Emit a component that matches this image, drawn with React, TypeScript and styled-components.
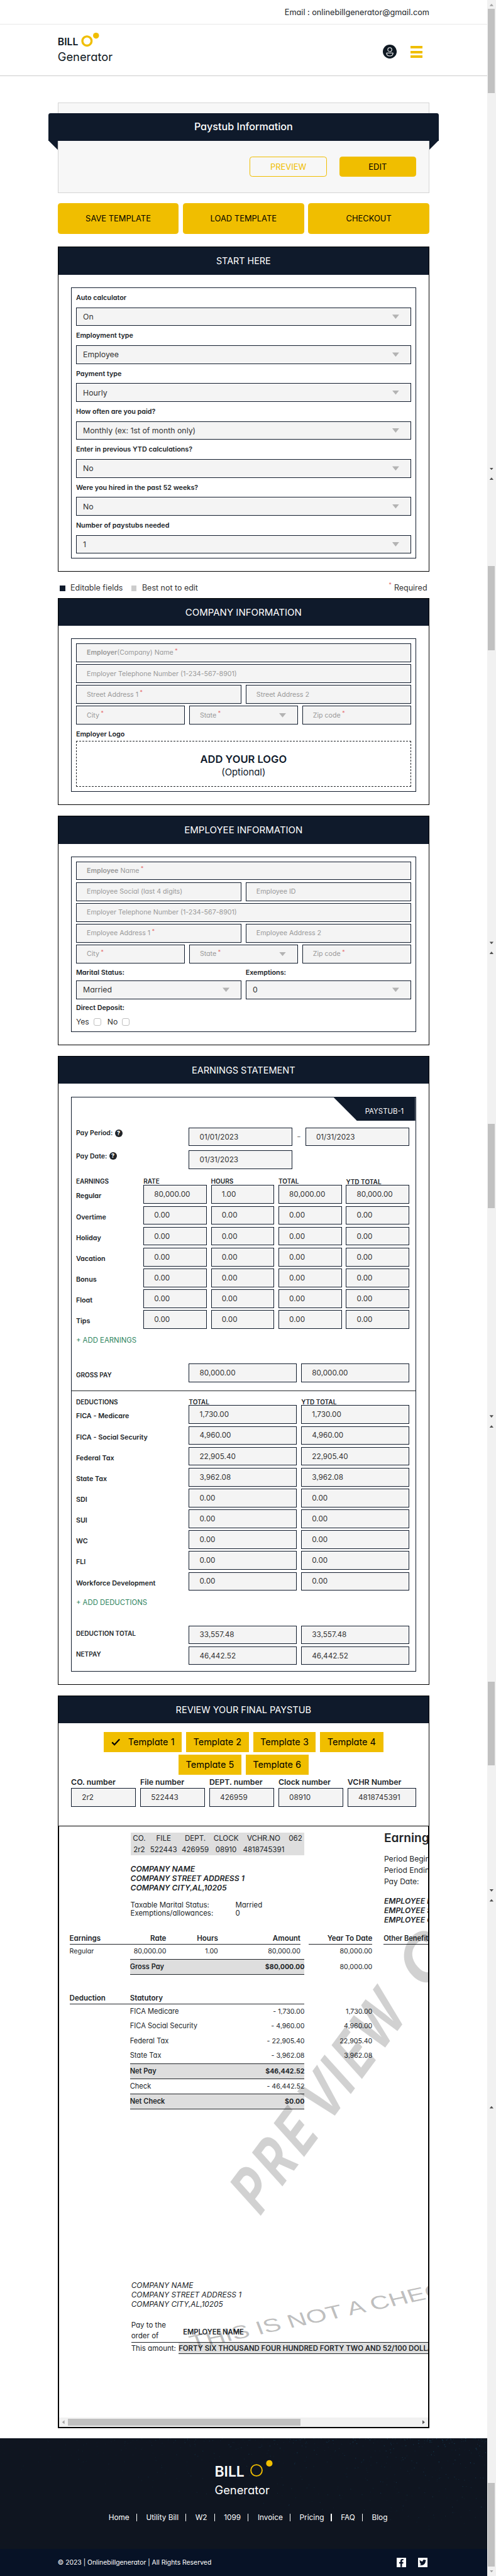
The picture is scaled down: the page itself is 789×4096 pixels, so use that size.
import React from "react";
import styled, { createGlobalStyle, css } from "styled-components";
import { FaFacebookF, FaTwitter } from "react-icons/fa";

const navy = "#0f1a2b";
const gold = "#f0be00";
const ink = "#212529";

const Global = createGlobalStyle`
  * { box-sizing: border-box; }
  html, body { margin: 0; padding: 0; background: #fff; overflow: hidden; }
  body {
    font-family: Inter, "Open Sans", "Liberation Sans", sans-serif;
    font-feature-settings: "cv11" 1, "ss03" 1;
    color: ${ink};
  }
`;

const Page = styled.div`
  zoom: 0.8494;
  display: flex;
  width: 929px;
  height: 4822px;
  white-space: nowrap;
`;
const Main = styled.div`
  width: 912px;
  display: flex;
  flex-direction: column;
`;

/* ---------- header ---------- */
const TopBar = styled.div`
  height: 46px;
  border-bottom: 1px solid #e9e9e9;
  padding: 0 108px;
  display: flex;
  align-items: center;
  justify-content: flex-end;
  font-size: 14.95px;
`;
const Header = styled.header`
  height: 96px;
  border-bottom: 1px solid #ccc;
  padding: 19px 121px 0 108px;
  display: flex;
  justify-content: space-between;
`;
const Logo = styled.div<{ $big?: boolean }>`
  display: flex;
  flex-direction: column;
  color: ${(p) => (p.$big ? "#fff" : "#0f1923")};
`;
const LogoTop = styled.div<{ $big?: boolean }>`
  display: flex;
  height: 28px;
  line-height: 28px;
  font-weight: 600;
  font-size: ${(p) => (p.$big ? "27px" : "18.6px")};
  svg { margin-left: ${(p) => (p.$big ? "10px" : "6px")}; margin-top: ${(p) => (p.$big ? "-9px" : "-4px")}; overflow: visible; }
`;
const LogoBottom = styled.div<{ $big?: boolean }>`
  font-size: 21.6px;
  line-height: 27px;
  margin-top: ${(p) => (p.$big ? "6px" : "0")};
`;
const HeaderIcons = styled.div`
  display: flex;
  gap: 26px;
  padding-top: 19px;
`;
const Burger = styled.div`
  width: 22px;
  padding-top: 2px;
  display: flex;
  flex-direction: column;
  gap: 4px;
  i { height: 5px; background: ${gold}; }
`;
const Body = styled.div`
  padding: 0 108px;
  height: 4423px;
  display: flex;
  flex-direction: column;
`;

/* ---------- intro card ---------- */
const Card = styled.div`
  margin-top: 50px;
  height: 169px;
  flex: none;
  background: #f7f7f7;
  border: 1px solid #d5d5d5;
  padding-top: 19px;
`;
const Ribbon = styled.div`
  position: relative;
  margin: 0 -19px;
  height: 51px;
  border-radius: 4px 4px 0 0;
  background: ${navy};
  color: #fff;
  font-size: 19px;
  font-weight: 500;
  line-height: 51px;
  text-align: center;
  &::before, &::after {
    content: "";
    position: absolute;
    top: 50.5px;
    width: 18px;
    height: 18px;
    background: ${navy};
  }
  &::before { left: 0; clip-path: polygon(0 0, 100% 0, 100% 100%); }
  &::after { right: 0; clip-path: polygon(0 0, 100% 0, 0 100%); }
`;
const CardButtons = styled.div`
  margin-top: 30px;
  padding-right: 24px;
  display: flex;
  justify-content: flex-end;
  gap: 24px;
`;
const Button = styled.button<{ $outline?: boolean; $w?: number }>`
  font: 400 15.2px/1 Inter, sans-serif;
  height: 38px;
  width: ${(p) => p.$w}px;
  border: 1px solid ${gold};
  border-radius: 5px;
  padding: 0;
  background: ${(p) => (p.$outline ? "transparent" : gold)};
  color: ${(p) => (p.$outline ? gold : "#000")};
`;
const Actions = styled.div`
  margin-top: 19px;
  display: grid;
  grid-template-columns: repeat(3, 1fr);
  gap: 8px;
  ${Button} { height: 58px; width: auto; }
`;

/* ---------- sections ---------- */
const Section = styled.section<{ $h: number; $gap: number }>`
  flex: none;
  margin-top: ${(p) => p.$gap}px;
  height: ${(p) => p.$h}px;
  border: 1px solid #000;
  display: flex;
  flex-direction: column;
`;
const SectionTitle = styled.h2<{ $size?: number }>`
  margin: 0;
  flex: none;
  height: 51px;
  line-height: 52px;
  background: ${navy};
  color: #fff;
  text-align: center;
  font-weight: 400;
  font-size: ${(p) => p.$size ?? 17.1}px;
`;
const Inner = styled.div<{ $h: number; $pt?: number }>`
  flex: none;
  margin: 24px 24px 0;
  height: ${(p) => p.$h}px;
  border: 1px solid ${navy};
  padding: ${(p) => p.$pt ?? 0}px 8px 0;
`;
const Label = styled.div<{ $h: number; $size?: number }>`
  height: ${(p) => p.$h}px;
  line-height: ${(p) => p.$h + 1}px;
  font-weight: 600;
  font-size: ${(p) => p.$size ?? 12.7}px;
`;
const FieldBox = styled.div<{ $pad?: number; $muted?: boolean; $size?: number }>`
  height: 35px;
  min-width: 0;
  border: 1px solid ${navy};
  background: #f4f4f4;
  padding: 0 28px 0 ${(p) => p.$pad ?? 19}px;
  display: flex;
  align-items: center;
  font-size: ${(p) => p.$size ?? 13.8}px;
  color: ${(p) => (p.$muted ? "#999" : "#333")};
  b { font-weight: 600; }
`;
const Arrow = styled.i`
  width: 13px;
  height: 8px;
  margin-left: auto;
  margin-right: -7px;
  background: #b3b3b3;
  clip-path: polygon(0 0, 100% 0, 50% 100%);
`;
const Star = styled.span`
  color: #e57373;
  font-size: 10px;
  line-height: 1;
  margin-left: 3px;
  align-self: flex-start;
  margin-top: 8px;
`;
const FieldRow = styled.div<{ $n?: number }>`
  display: grid;
  grid-template-columns: repeat(${(p) => p.$n ?? 1}, 1fr);
  gap: 8px;
  margin-bottom: 4px;
`;

const Select = ({ v, size = 14.5 }: { v: string; size?: number }) => (
  <FieldBox $pad={12} $size={size}>{v}<Arrow /></FieldBox>
);
const Hint = ({ children, req, arrow }: { children: React.ReactNode; req?: boolean; arrow?: boolean }) => (
  <FieldBox $muted $size={12.55}>
    <span>{children}</span>{req && <Star>*</Star>}{arrow && <Arrow />}
  </FieldBox>
);

const Legend = styled.div`
  flex: none;
  height: 49.3px;
  padding: 12px 4px 0;
  display: flex;
  align-items: center;
  font-size: 14.7px;
  color: #333;
`;
const Swatch = styled.i<{ $c: string; $ml?: number }>`
  width: 10px;
  height: 10px;
  background: ${(p) => p.$c};
  margin: 2px 10px 0 ${(p) => p.$ml ?? 0}px;
`;
const Required = styled.span`
  margin-left: auto;
  display: flex;
  ${Star} { margin: -1px 5px 0 0; }
`;
const LogoDrop = styled.div`
  height: 85.5px;
  border: 1px dashed ${ink};
  display: flex;
  flex-direction: column;
  align-items: center;
  padding-top: 20px;
  line-height: 26px;
  color: ${navy};
  strong { font-weight: 600; font-size: 19.45px; }
  span { font-size: 17.5px; line-height: 23px; }
`;
const YesNo = styled.div`
  display: flex;
  align-items: center;
  height: 28px;
  font-size: 14.4px;
  color: #333;
  i {
    width: 14px; height: 14px;
    border: 1px solid #bfbfbf;
    border-radius: 3.5px;
    margin: 1px 12px 0 8px;
  }
`;

/* ---------- earnings statement ---------- */
const Tab = styled.div`
  width: 153px;
  height: 44px;
  margin: 0 -8px 0 auto;
  background: ${navy};
  clip-path: polygon(0 0, 100% 0, 100% 100%, 44px 100%);
  color: #fff;
  font-size: 13.4px;
  line-height: 54px;
  padding-left: 59px;
`;
const Period = styled.div<{ $first?: boolean }>`
  margin-top: ${(p) => (p.$first ? 12.4 : 0)}px;
  height: 43px;
  display: grid;
  grid-template-columns: 211.3px 194px 24.3px 195px;
`;
const PeriodLabel = styled.div`
  display: flex;
  align-items: center;
  height: 21px;
  font-size: 12.4px;
  font-weight: 600;
  gap: 4px;
`;
const Help = styled.i`
  width: 14px;
  height: 14px;
  border-radius: 50%;
  background: ${ink};
  color: #fff;
  font: 800 10.5px/14px Inter, sans-serif;
  text-align: center;
`;
const Dash = styled.div`
  text-align: center;
  line-height: 34px;
  color: #777;
`;
const cols4 = css`
  display: grid;
  grid-template-columns: 118.3px repeat(4, 118.5px);
  column-gap: 8px;
`;
const cols2 = css`
  display: grid;
  grid-template-columns: 203.3px 202.5px 202.7px;
  column-gap: 8px;
`;
const Line = styled.div<{ $two?: boolean }>`
  ${(p) => (p.$two ? cols2 : cols4)}
  height: 39.02px;
`;
const HeadLine = styled.div<{ $two?: boolean; $h: number; $pt: number }>`
  ${(p) => (p.$two ? cols2 : cols4)}
  height: ${(p) => p.$h}px;
  padding-top: ${(p) => p.$pt}px;
  line-height: 15px;
  font-weight: 600;
  font-size: 11.85px;
  span:nth-child(5) { padding-top: 2px; }
`;
const LineLabel = styled.div<{ $h?: number; $caps?: boolean }>`
  font-weight: 600;
  font-size: ${(p) => (p.$caps ? 11.85 : 12.7)}px;
  line-height: ${(p) => p.$h ?? 43}px;
`;
const AddLink = styled.div`
  height: 36px;
  line-height: 36px;
  color: #2f855f;
  font-size: 13.4px;
`;
const Spacer = styled.div<{ $h: number }>`
  flex: none;
  height: ${(p) => p.$h}px;
`;
const Divider = styled.div`
  margin: 12px -8px 0;
  border-top: 1px solid ${ink};
`;

/* ---------- review ---------- */
const Templates = styled.div<{ $first?: boolean }>`
  display: flex;
  justify-content: center;
  gap: 8px;
  margin-top: ${(p) => (p.$first ? 16 : 4)}px;
`;
const TemplateButton = styled.div`
  height: 38px;
  padding: 0 13.6px;
  background: ${gold};
  color: #000;
  font-size: 17.1px;
  display: flex;
  align-items: center;
  svg { margin-right: 15px; }
`;
const Numbers = styled.div`
  display: grid;
  grid-template-columns: repeat(5, 1fr);
  gap: 8px;
  margin: 3px 24px 0;
`;
const Frame = styled.div`
  position: relative;
  margin-top: auto;
  height: 1126px;
  border: 1px solid #000;
  overflow: hidden;
  display: flex;
  flex-direction: column;
`;
const StubTop = styled.div`
  flex: none;
  height: 198.7px;
  padding: 12px 0 0 134px;
  display: flex;
`;
const StubLeft = styled.div`
  width: 326px;
  flex: none;
`;
const StubRight = styled.div`
  margin: -5.3px 0 0 149px;
  font-size: 14.2px;
  line-height: 21px;
  h3 { margin: 0 0 13.8px; font-size: 22.5px; line-height: 30px; font-weight: 600; }
`;
const CodeTable = styled.div`
  display: grid;
  grid-template-columns: 32.7px 58.6px 60px 55.4px 85.6px 33.7px;
  grid-template-rows: 21px 21px;
  background: #dedede;
  font-size: 13.65px;
  line-height: 22px;
  text-align: center;
  span { margin: 0 -4px; }
`;
const Address = styled.div<{ $bold?: boolean; $mt: number; $ml?: number; $size: number }>`
  flex: none;
  margin-top: ${(p) => p.$mt}px;
  margin-left: ${(p) => p.$ml ?? 0}px;
  font-style: italic;
  font-weight: ${(p) => (p.$bold ? 600 : 400)};
  font-size: ${(p) => p.$size}px;
  line-height: 18px;
`;
const TaxInfo = styled.div`
  margin-top: 15.7px;
  display: grid;
  grid-template-columns: 196.5px auto;
  font-size: 13.5px;
  line-height: 16px;
`;
const StubLine = styled.div<{ $h: number }>`
  flex: none;
  height: ${(p) => p.$h}px;
  line-height: ${(p) => p.$h}px;
  margin-left: 19.8px;
  display: flex;
  font-size: 12.5px;
  > * { flex: none; }
  b { font-weight: 600; font-size: 13.6px; }
`;
const HeadCells = styled.div`
  width: 432.5px;
  border-bottom: 1px solid ${ink};
  display: grid;
  grid-template-columns: 113.2px 68px 97px 1fr;
  text-align: right;
  :first-child { text-align: left; }
`;
const BodyCells = styled(HeadCells)`
  border-bottom: 0;
`;
const Ytd = styled.div<{ $rule?: boolean; $ml: number }>`
  margin-left: ${(p) => p.$ml}px;
  width: 119px;
  text-align: right;
  border-bottom: ${(p) => (p.$rule ? 1 : 0)}px solid ${ink};
`;
const Others = styled.div`
  margin-left: 21px;
  width: 240px;
  border-bottom: 1px solid ${ink};
  b { font-size: 13px; }
`;
const Item = styled.div<{ $total?: boolean }>`
  margin-left: 113.2px;
  width: 327px;
  display: flex;
  justify-content: space-between;
  span { font-size: 13.1px; }
  em { font-style: normal; }
  ${(p) =>
    p.$total &&
    css`
      background: #dedede;
      border: solid ${ink};
      border-width: 1px 0;
      line-height: 28px;
      b { font-size: 13px; }
      b + b { font-weight: 700; font-size: 12.5px; }
    `}
`;
const DeductionHead = styled.div`
  width: 440.2px;
  border-bottom: 1px solid ${ink};
  display: grid;
  grid-template-columns: 113.2px auto;
`;
const PayTo = styled.div`
  flex: none;
  margin: 19.9px 0 0 135.3px;
  height: 43px;
  border-bottom: 1px solid ${ink};
  display: grid;
  grid-template-columns: 97.2px auto;
  font-size: 13.6px;
  line-height: 21px;
  b { font-weight: 600; font-size: 13.2px; line-height: 45px; }
`;
const AmountRow = styled.div`
  flex: none;
  margin-left: 135.3px;
  height: 21.6px;
  line-height: 21.6px;
  display: flex;
  font-size: 13.6px;
  span { width: 88.9px; flex: none; }
  b {
    flex: none;
    width: 560px;
    font-weight: 600;
    font-size: 13.41px;
    background: #dedede;
    border-bottom: 1px solid ${ink};
  }
`;
const Watermark = styled.svg`
  position: absolute;
  inset: 0;
  width: 692px;
  height: 1107px;
`;
const HScroll = styled.div`
  flex: none;
  margin-top: auto;
  height: 17px;
  background: #f1f1f1;
  display: flex;
  align-items: center;
  padding: 0 6px;
`;
const HThumb = styled.i`
  width: 436px;
  height: 13px;
  background: #c1c1c1;
  margin: 0 auto 0 6.5px;
`;
const caretShapes = {
  up: "50% 0, 100% 100%, 0 100%",
  down: "0 0, 100% 0, 50% 100%",
  left: "100% 0, 100% 100%, 0 50%",
  right: "0 0, 100% 50%, 0 100%",
};
const Caret = styled.i<{ $dir: "up" | "down" | "left" | "right"; $c?: string }>`
  flex: none;
  width: ${(p) => (p.$dir === "left" || p.$dir === "right" ? 4.5 : 7.5)}px;
  height: ${(p) => (p.$dir === "left" || p.$dir === "right" ? 7.5 : 4.5)}px;
  background: ${(p) => p.$c ?? "#505050"};
  clip-path: polygon(${(p) => caretShapes[p.$dir]});
`;

/* ---------- footer ---------- */
const Footer = styled.footer`
  position: relative;
  height: 207px;
  background: #0f1520;
  color: #fff;
  display: flex;
  flex-direction: column;
  align-items: center;
`;
const Speckles = styled.svg`
  position: absolute;
  inset: 0;
  width: 912px;
  height: 207px;
`;
const FooterLogo = styled.div`
  position: relative;
  align-self: flex-start;
  margin: 49px 0 0 402px;
`;
const Nav = styled.nav`
  position: relative;
  margin-top: 26px;
  display: flex;
  line-height: 24px;
  font-size: 13.9px;
  a { padding-left: 17px; }
  a:not(:last-child)::after {
    content: "";
    display: inline-block;
    width: 1.5px;
    height: 14px;
    margin-left: 13px;
    vertical-align: -2px;
    background: #fff;
  }
`;
const Bottom = styled.div`
  height: 50px;
  background: #071226;
  color: #fff;
  padding: 0 111px 0 108px;
  display: flex;
  align-items: center;
  font-size: 12.24px;
`;
const Social = styled.span<{ $push?: boolean }>`
  width: 18px;
  height: 18px;
  background: #fff;
  color: #071226;
  margin-left: ${(p) => (p.$push ? "auto" : "22px")};
  display: flex;
  align-items: ${(p) => (p.$push ? "flex-end" : "center")};
  justify-content: center;
  overflow: hidden;
`;

/* ---------- scroll rail ---------- */
const Rail = styled.div`
  width: 17px;
  background: #f1f1f1;
  display: flex;
  flex-direction: column;
  align-items: center;
`;
const Thumb = styled.i<{ $gap: number }>`
  flex: none;
  width: 13px;
  height: 157px;
  background: #c1c1c1;
  margin-top: ${(p) => p.$gap}px;
`;

const startFields: [string, string][] = [
  ["Auto calculator", "On"],
  ["Employment type", "Employee"],
  ["Payment type", "Hourly"],
  ["How often are you paid?", "Monthly (ex: 1st of month only)"],
  ["Enter in previous YTD calculations?", "No"],
  ["Were you hired in the past 52 weeks?", "No"],
  ["Number of paystubs needed", "1"],
];
const earnings: [string, string[]][] = [
  ["Regular", ["80,000.00", "1.00", "80,000.00", "80,000.00"]],
  ...["Overtime", "Holiday", "Vacation", "Bonus", "Float", "Tips"].map(
    (n) => [n, ["0.00", "0.00", "0.00", "0.00"]] as [string, string[]]
  ),
];
const deductions: [string, string][] = [
  ["FICA - Medicare", "1,730.00"],
  ["FICA - Social Security", "4,960.00"],
  ["Federal Tax", "22,905.40"],
  ["State Tax", "3,962.08"],
  ["SDI", "0.00"],
  ["SUI", "0.00"],
  ["WC", "0.00"],
  ["FLI", "0.00"],
  ["Workforce Development", "0.00"],
];
const numbers: [string, string][] = [
  ["CO. number", "2r2"],
  ["File number", "522443"],
  ["DEPT. number", "426959"],
  ["Clock number", "08910"],
  ["VCHR Number", "4818745391"],
];
const statutory: [string, string][] = [
  ["FICA Medicare", "1,730.00"],
  ["FICA Social Security", "4,960.00"],
  ["Federal Tax", "22,905.40"],
  ["State Tax", "3,962.08"],
];

const LogoMark = ({ big }: { big?: boolean }) => (
  <Logo $big={big}>
    <LogoTop $big={big}>
      BILL
      {big ? (
        <svg width="44" height="32" viewBox="0 0 44 32">
          <circle cx="13" cy="20" r="10.5" fill="none" stroke={gold} strokeWidth="2.2" />
          <circle cx="37" cy="7" r="6" fill={gold} />
        </svg>
      ) : (
        <svg width="34" height="28" viewBox="0 0 34 28">
          <circle cx="11" cy="15.5" r="8.6" fill="none" stroke={gold} strokeWidth="4" />
          <circle cx="28" cy="5.5" r="5.6" fill={gold} />
        </svg>
      )}
    </LogoTop>
    <LogoBottom $big={big}>Generator</LogoBottom>
  </Logo>
);

// Seeded so that the footer texture is the same on every render.
const specks = (() => {
  let seed = 7;
  const rnd = () => {
    seed = (seed * 16807) % 2147483647;
    return seed / 2147483647;
  };
  return Array.from({ length: 620 }, () => {
    const x = 912 * Math.pow(rnd(), 0.6);
    const y = 190 * Math.pow(rnd(), 2.3) * (0.3 + (0.7 * x) / 912);
    return { x, y, o: 0.08 + 0.5 * rnd() * (x / 912) * (1 - y / 210), w: 0.8 + rnd() * 0.8 };
  });
})();

export default function App() {
  return (
    <>
      <Global />
      <Page>
        <Main>
          <TopBar>Email : onlinebillgenerator@gmail.com</TopBar>
          <Header>
            <LogoMark />
            <HeaderIcons>
              <svg width="26" height="26" viewBox="0 0 26 26">
                <circle cx="13" cy="13" r="13" fill="#0f1923" />
                <circle cx="13" cy="9.3" r="3.7" fill="none" stroke="#fff" strokeWidth="1.3" />
                <path d="M7 15.6h12c.3 3-1.6 5.6-6 5.6s-6.3-2.6-6-5.6z" fill="none" stroke="#fff" strokeWidth="1.3" strokeLinejoin="round" />
              </svg>
              <Burger><i /><i /><i /></Burger>
            </HeaderIcons>
          </Header>

          <Body>
            <Card>
              <Ribbon>Paystub Information</Ribbon>
              <CardButtons>
                <Button $outline $w={144}>PREVIEW</Button>
                <Button $w={143}>EDIT</Button>
              </CardButtons>
            </Card>
            <Actions>
              <Button>SAVE TEMPLATE</Button>
              <Button>LOAD TEMPLATE</Button>
              <Button>CHECKOUT</Button>
            </Actions>

            <Section $gap={24} $h={608}>
              <SectionTitle $size={16.9}>START HERE</SectionTitle>
              <Inner $h={507}>
                {startFields.map(([l, v]) => (
                  <div key={l}>
                    <Label $h={36.05}>{l}</Label>
                    <Select v={v} />
                  </div>
                ))}
              </Inner>
            </Section>

            <Legend>
              <Swatch $c={navy} />Editable fields
              <Swatch $c="#ccc" $ml={16} />Best not to edit
              <Required><Star>*</Star>Required</Required>
            </Legend>

            <Section $gap={0} $h={388}>
              <SectionTitle $size={17.7}>COMPANY INFORMATION</SectionTitle>
              <Inner $h={287} $pt={8}>
                <FieldRow><Hint req><b>Employer</b>(Company) Name</Hint></FieldRow>
                <FieldRow><Hint>Employer Telephone Number (1-234-567-8901)</Hint></FieldRow>
                <FieldRow $n={2}><Hint req>Street Address 1</Hint><Hint>Street Address 2</Hint></FieldRow>
                <FieldRow $n={3}><Hint req>City</Hint><Hint req arrow>State</Hint><Hint req>Zip code</Hint></FieldRow>
                <Label $h={27}>Employer Logo</Label>
                <LogoDrop><strong>ADD YOUR LOGO</strong><span>(Optional)</span></LogoDrop>
              </Inner>
            </Section>

            <Section $gap={20} $h={430}>
              <SectionTitle $size={17.7}>EMPLOYEE INFORMATION</SectionTitle>
              <Inner $h={329} $pt={8}>
                <FieldRow><Hint req><b>Employee</b> Name</Hint></FieldRow>
                <FieldRow $n={2}><Hint>Employee Social (last 4 digits)</Hint><Hint>Employee ID</Hint></FieldRow>
                <FieldRow><Hint>Employer Telephone Number (1-234-567-8901)</Hint></FieldRow>
                <FieldRow $n={2}><Hint req>Employee Address 1</Hint><Hint>Employee Address 2</Hint></FieldRow>
                <FieldRow $n={3}><Hint req>City</Hint><Hint req arrow>State</Hint><Hint req>Zip code</Hint></FieldRow>
                <FieldRow $n={2}>
                  <div><Label $h={28}>Marital Status:</Label><Select v="Married" /></div>
                  <div><Label $h={28}>Exemptions:</Label><Select v="0" /></div>
                </FieldRow>
                <Label $h={24}>Direct Deposit:</Label>
                <YesNo>Yes<i />No<i /></YesNo>
              </Inner>
            </Section>

            <Section $gap={19.7} $h={1177}>
              <SectionTitle>EARNINGS STATEMENT</SectionTitle>
              <Inner $h={1076}>
                <Tab>PAYSTUB-1</Tab>
                <Period $first>
                  <PeriodLabel>Pay Period: <Help>?</Help></PeriodLabel>
                  <FieldBox>01/01/2023</FieldBox>
                  <Dash>-</Dash>
                  <FieldBox>01/31/2023</FieldBox>
                </Period>
                <Period>
                  <PeriodLabel>Pay Date: <Help>?</Help></PeriodLabel>
                  <FieldBox>01/31/2023</FieldBox>
                </Period>
                <HeadLine $h={22} $pt={7}>
                  <span>EARNINGS</span><span>RATE</span><span>HOURS</span><span>TOTAL</span><span>YTD TOTAL</span>
                </HeadLine>
                {earnings.map(([n, vals]) => (
                  <Line key={n}>
                    <LineLabel>{n}</LineLabel>
                    {vals.map((v, i) => <FieldBox key={i}>{v}</FieldBox>)}
                  </Line>
                ))}
                <AddLink>+ ADD EARNINGS</AddLink>
                <Spacer $h={24.8} />
                <Line $two>
                  <LineLabel $caps>GROSS PAY</LineLabel>
                  <FieldBox>80,000.00</FieldBox><FieldBox>80,000.00</FieldBox>
                </Line>
                <Divider />
                <HeadLine $two $h={26} $pt={12}>
                  <span>DEDUCTIONS</span><span>TOTAL</span><span>YTD TOTAL</span>
                </HeadLine>
                {deductions.map(([n, v]) => (
                  <Line $two key={n}>
                    <LineLabel>{n}</LineLabel>
                    <FieldBox>{v}</FieldBox><FieldBox>{v}</FieldBox>
                  </Line>
                ))}
                <AddLink>+ ADD DEDUCTIONS</AddLink>
                <Spacer $h={25} />
                <Line $two>
                  <LineLabel $caps $h={29}>DEDUCTION TOTAL</LineLabel>
                  <FieldBox>33,557.48</FieldBox><FieldBox>33,557.48</FieldBox>
                </Line>
                <Line $two>
                  <LineLabel $caps $h={29}>NETPAY</LineLabel>
                  <FieldBox>46,442.52</FieldBox><FieldBox>46,442.52</FieldBox>
                </Line>
              </Inner>
            </Section>

            <Section $gap={20.3} $h={1371}>
              <SectionTitle>REVIEW YOUR FINAL PAYSTUB</SectionTitle>
              <Templates $first>
                <TemplateButton>
                  <svg width="17" height="14" viewBox="0 0 17 14">
                    <path d="M1.5 7.5 6 12 15.500 1.8" fill="none" stroke="#000" strokeWidth="2.6" />
                  </svg>
                  Template 1
                </TemplateButton>
                <TemplateButton>Template 2</TemplateButton>
                <TemplateButton>Template 3</TemplateButton>
                <TemplateButton>Template 4</TemplateButton>
              </Templates>
              <Templates>
                <TemplateButton>Template 5</TemplateButton>
                <TemplateButton>Template 6</TemplateButton>
              </Templates>
              <Numbers>
                {numbers.map(([l, v]) => (
                  <div key={l}>
                    <Label $h={22} $size={14.5}>{l}</Label>
                    <FieldBox>{v}</FieldBox>
                  </div>
                ))}
              </Numbers>

              <Frame>
                <StubTop>
                  <StubLeft>
                    <CodeTable>
                      <span>CO.</span><span>FILE</span><span>DEPT.</span><span>CLOCK</span><span>VCHR.NO</span><span>062</span>
                      <span>2r2</span><span>522443</span><span>426959</span><span>08910</span><span>4818745391</span><span />
                    </CodeTable>
                    <Address $bold $mt={16} $size={14.3}>
                      COMPANY NAME<br />COMPANY STREET ADDRESS 1<br />COMPANY CITY,AL,10205
                    </Address>
                    <TaxInfo>
                      <span>Taxable Marital Status:</span><span>Married</span>
                      <span>Exemptions/allowances:</span><span>0</span>
                    </TaxInfo>
                  </StubLeft>
                  <StubRight>
                    <h3>Earnings Statement</h3>
                    Period Beginning:<br />Period Ending:<br />Pay Date:
                    <Address $bold $mt={16.5} $size={14.3}>
                      EMPLOYEE NAME<br />EMPLOYEE STREET ADDRESS 1<br />EMPLOYEE CITY,AL,10205
                    </Address>
                  </StubRight>
                </StubTop>

                <StubLine $h={22}>
                  <HeadCells><b>Earnings</b><b>Rate</b><b>Hours</b><b>Amount</b></HeadCells>
                  <Ytd $rule $ml={15.7}><b>Year To Date</b></Ytd>
                  <Others><b>Other Benefits and</b></Others>
                </StubLine>
                <StubLine $h={27}>
                  <BodyCells><span>Regular</span><span>80,000.00</span><span>1.00</span><span>80,000.00</span></BodyCells>
                  <Ytd $ml={15.7}>80,000.00</Ytd>
                </StubLine>
                <StubLine $h={30}>
                  <Item $total><b>Gross Pay</b><b>$80,000.00</b></Item>
                  <Ytd $ml={8}>80,000.00</Ytd>
                </StubLine>
                <Spacer $h={33} />
                <StubLine $h={22}>
                  <DeductionHead><b>Deduction</b><b>Statutory</b></DeductionHead>
                </StubLine>
                {statutory.map(([n, v]) => (
                  <StubLine $h={27.65} key={n}>
                    <Item><span>{n}</span><em>- {v}</em></Item>
                    <Ytd $ml={8}>{v}</Ytd>
                  </StubLine>
                ))}
                <StubLine $h={29.4}><Item $total><b>Net Pay</b><b>$46,442.52</b></Item></StubLine>
                <StubLine $h={27.4}><Item><span>Check</span><em>- 46,442.52</em></Item></StubLine>
                <StubLine $h={29.4}><Item $total><b>Net Check</b><b>$0.00</b></Item></StubLine>
                <Address $mt={320.2} $ml={135.3} $size={14}>
                  COMPANY NAME<br />COMPANY STREET ADDRESS 1<br />COMPANY CITY,AL,10205
                </Address>
                <PayTo>
                  <span>Pay to the<br />order of</span>
                  <b>EMPLOYEE NAME</b>
                </PayTo>
                <AmountRow>
                  <span>This amount:</span>
                  <b>FORTY SIX THOUSAND FOUR HUNDRED FORTY TWO AND 52/100 DOLLARS</b>
                </AmountRow>
                <HScroll>
                  <Caret $dir="left" $c="#a3a3a3" />
                  <HThumb />
                  <Caret $dir="right" />
                </HScroll>
                <Watermark viewBox="110 3419.3 692 1107">
                  <g fontSize="100" fontWeight="700" fillOpacity="0.18">
                    <text transform="matrix(0.536 -0.723 0.784 0.868 487.7 4147.9)" x="-7 69 145 231 308 347 413">
                      PREVIEW
                    </text>
                    <text transform="matrix(0.745 -1.004 0.784 0.868 487.7 4147.9)" x="413">C</text>
                  </g>
                  <text
                    transform="matrix(1.342 -0.284 0.362 0.932 360 4397.3)"
                    fontFamily="Liberation Sans"
                    fontSize="36"
                    fillOpacity="0.27"
                  >
                    THIS IS NOT A CHECK
                  </text>
                </Watermark>
              </Frame>
            </Section>
          </Body>

          <Footer>
            <Speckles viewBox="0 0 912 207">
              {specks.map((s, i) => (
                <rect key={i} x={s.x} y={s.y} width={s.w} height={s.w} fill="#1f6f94" opacity={s.o} />
              ))}
            </Speckles>
            <FooterLogo><LogoMark big /></FooterLogo>
            <Nav>
              {["Home", "Utility Bill", "W2", "1099", "Invoice", "Pricing", "FAQ", "Blog"].map((n) => (
                <a key={n}>{n}</a>
              ))}
            </Nav>
          </Footer>
          <Bottom>
            © 2023 | Onlinebillgenerator | All Rights Reserved
            <Social $push><FaFacebookF size={15} /></Social>
            <Social><FaTwitter size={13} /></Social>
          </Bottom>
        </Main>

        <Rail>
          <Spacer $h={7} />
          <Caret $dir="up" $c="#a3a3a3" />
          <Thumb $gap={5.5} />
          <Spacer $h={701.5} />
          <Caret $dir="down" />
          <Spacer $h={14} />
          <Caret $dir="up" />
          <Thumb $gap={161.5} />
          <Spacer $h={546} />
          <Caret $dir="down" />
          <Spacer $h={14} />
          <Caret $dir="up" />
          <Thumb $gap={318.3} />
          <Spacer $h={388.2} />
          <Caret $dir="down" />
          <Spacer $h={14.3} />
          <Caret $dir="up" />
          <Thumb $gap={475.6} />
          <Spacer $h={231.5} />
          <Caret $dir="down" />
          <Spacer $h={14} />
          <Caret $dir="up" />
          <Spacer $h={382.8} />
          <Caret $dir="up" />
          <Thumb $gap={701.2} />
          <Spacer $h={6} />
          <Caret $dir="down" $c="#a3a3a3" />
        </Rail>
      </Page>
    </>
  );
}
